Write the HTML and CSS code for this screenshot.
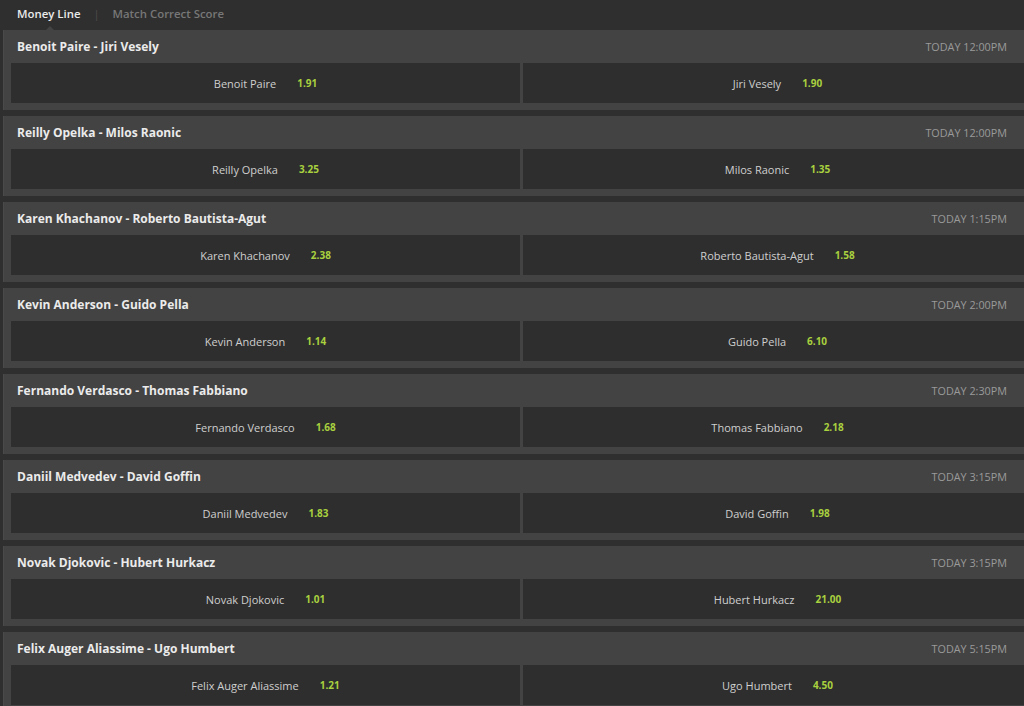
FILE: index.html
```html
<!DOCTYPE html>
<html>
<head>
<meta charset="utf-8">
<link rel="stylesheet" href="styles.css">
</head>
<body>
<div class="tabs">
  <span class="tab active">Money Line</span>
  <span class="sep">|</span>
  <span class="tab">Match Correct Score</span>
</div>
<div class="list">
  <div class="card">
    <div class="head"><span class="title">Benoit Paire - Jiri Vesely</span><span class="time">TODAY 12:00PM</span></div>
    <div class="odds"><div class="cell"><span class="name">Benoit Paire</span><span class="price">1.91</span></div><div class="cell"><span class="name">Jiri Vesely</span><span class="price">1.90</span></div></div>
  </div>
  <div class="card">
    <div class="head"><span class="title">Reilly Opelka - Milos Raonic</span><span class="time">TODAY 12:00PM</span></div>
    <div class="odds"><div class="cell"><span class="name">Reilly Opelka</span><span class="price">3.25</span></div><div class="cell"><span class="name">Milos Raonic</span><span class="price">1.35</span></div></div>
  </div>
  <div class="card">
    <div class="head"><span class="title">Karen Khachanov - Roberto Bautista-Agut</span><span class="time">TODAY 1:15PM</span></div>
    <div class="odds"><div class="cell"><span class="name">Karen Khachanov</span><span class="price">2.38</span></div><div class="cell"><span class="name">Roberto Bautista-Agut</span><span class="price">1.58</span></div></div>
  </div>
  <div class="card">
    <div class="head"><span class="title">Kevin Anderson - Guido Pella</span><span class="time">TODAY 2:00PM</span></div>
    <div class="odds"><div class="cell"><span class="name">Kevin Anderson</span><span class="price">1.14</span></div><div class="cell"><span class="name">Guido Pella</span><span class="price">6.10</span></div></div>
  </div>
  <div class="card">
    <div class="head"><span class="title">Fernando Verdasco - Thomas Fabbiano</span><span class="time">TODAY 2:30PM</span></div>
    <div class="odds"><div class="cell"><span class="name">Fernando Verdasco</span><span class="price">1.68</span></div><div class="cell"><span class="name">Thomas Fabbiano</span><span class="price">2.18</span></div></div>
  </div>
  <div class="card">
    <div class="head"><span class="title">Daniil Medvedev - David Goffin</span><span class="time">TODAY 3:15PM</span></div>
    <div class="odds"><div class="cell"><span class="name">Daniil Medvedev</span><span class="price">1.83</span></div><div class="cell"><span class="name">David Goffin</span><span class="price">1.98</span></div></div>
  </div>
  <div class="card">
    <div class="head"><span class="title">Novak Djokovic - Hubert Hurkacz</span><span class="time">TODAY 3:15PM</span></div>
    <div class="odds"><div class="cell"><span class="name">Novak Djokovic</span><span class="price">1.01</span></div><div class="cell"><span class="name">Hubert Hurkacz</span><span class="price">21.00</span></div></div>
  </div>
  <div class="card">
    <div class="head"><span class="title">Felix Auger Aliassime - Ugo Humbert</span><span class="time">TODAY 5:15PM</span></div>
    <div class="odds"><div class="cell"><span class="name">Felix Auger Aliassime</span><span class="price">1.21</span></div><div class="cell"><span class="name">Ugo Humbert</span><span class="price">4.50</span></div></div>
  </div>
</div>
</body>
</html>
```
FILE: styles.css
```css
html, body {
  margin: 0;
  padding: 0;
  background: #2f2f2f;
  font-family: "Open Sans", "Liberation Sans", sans-serif;
  overflow: hidden;
}
.tabs {
  height: 30px;
  display: flex;
  align-items: center;
  padding-left: 17px;
  font-size: 11.4px;
  box-sizing: border-box;
  padding-bottom: 3px;
}
.tab {
  color: #777;
  font-weight: 600;
}
.tab.active {
  color: #eaeaea;
  position: relative;
}
.tab.active::after {
  content: "";
  position: absolute;
  left: 28px;
  bottom: -10px;
  border-left: 5px solid transparent;
  border-right: 5px solid transparent;
  border-bottom: 5px solid #434343;
}
.sep {
  color: #4e4e4e;
  margin: 0 13px 0 13px;
  font-size: 11px;
}
.list {
  padding-left: 3px;
}
.card {
  background: #434343;
  padding: 0 0 7px 7px;
  margin-bottom: 6px;
  border-left: 1px solid #4a4a4a;
}
.head {
  height: 33px;
  display: flex;
  align-items: center;
  justify-content: space-between;
  padding: 0 17px 0 6px;
}
.title {
  color: #ebebeb;
  font-weight: 700;
  font-size: 12px;
}
.time {
  color: #9a9a9a;
  font-size: 10.8px;
}
.odds {
  display: flex;
  gap: 3px;
  height: 40px;
}
.cell {
  flex: 1 1 0;
  background: #2e2e2e;
  display: flex;
  align-items: center;
  justify-content: center;
  gap: 21px;
}
.cell:first-child {
  flex: 0 0 509px;
}
.cell + .cell {
  padding-left: 8px;
}
.name {
  color: #cfcfcf;
  font-size: 11px;
}
.price {
  color: #a9d13f;
  font-weight: 700;
  font-size: 10px;
}
```
